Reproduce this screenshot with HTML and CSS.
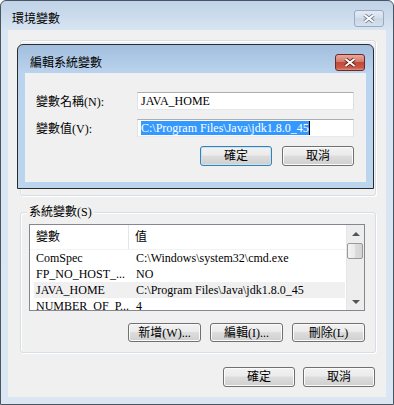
FILE: index.html
```html
<!DOCTYPE html>
<html lang="zh-Hant">
<head>
    <meta charset="UTF-8">
    <title>環境變數</title>
    <link rel="stylesheet" href="styles.css">
</head>
<body>
    <div class="window">
        <div class="titlebar">
            <span class="title">環境變數</span>
            <span class="close inactive">
                <svg width="12" height="9" viewBox="0 0 12 9"><path d="M1.5 1 L10.5 8 M10.5 1 L1.5 8" stroke="#6d7b8c" stroke-width="3.6" fill="none"/><path d="M1.5 1 L10.5 8 M10.5 1 L1.5 8" stroke="#fff" stroke-width="2" fill="none"/></svg>
            </span>
        </div>
        <div class="client">
            <!-- User variables group, mostly behind the dialog -->
            <div class="group user"></div>

            <!-- System variables -->
            <div class="group system">
                <span class="group-label">系統變數(S)</span>
                <div class="list">
                    <div class="list-body">
                        <div class="list-head">
                            <span>變數</span>
                            <span>值</span>
                        </div>
                        <div class="row"><span>ComSpec</span><span>C:\Windows\system32\cmd.exe</span></div>
                        <div class="row"><span>FP_NO_HOST_...</span><span>NO</span></div>
                        <div class="row selected"><span>JAVA_HOME</span><span>C:\Program Files\Java\jdk1.8.0_45</span></div>
                        <div class="row"><span>NUMBER_OF_P...</span><span>4</span></div>
                    </div>
                    <div class="scrollbar">
                        <div class="arrow up"><i></i></div>
                        <div class="thumb"></div>
                        <div class="track"></div>
                        <div class="arrow down"><i></i></div>
                    </div>
                </div>
                <div class="actions">
                    <button class="btn">新增(W)...</button>
                    <button class="btn">編輯(I)...</button>
                    <button class="btn">刪除(L)</button>
                </div>
            </div>

            <div class="dialog-buttons">
                <button class="btn">確定</button>
                <button class="btn">取消</button>
            </div>
        </div>

        <!-- Edit dialog on top -->
        <div class="dialog">
            <div class="titlebar">
                <span class="title">編輯系統變數</span>
                <span class="close active">
                    <svg width="12" height="9" viewBox="0 0 12 9"><path d="M1.5 1 L10.5 8 M10.5 1 L1.5 8" stroke="#5a1e18" stroke-width="3.6" fill="none"/><path d="M1.5 1 L10.5 8 M10.5 1 L1.5 8" stroke="#fff" stroke-width="2" fill="none"/></svg>
                </span>
            </div>
            <div class="client">
                <div class="field">
                    <label>變數名稱(N):</label>
                    <div class="input">JAVA_HOME</div>
                </div>
                <div class="field">
                    <label>變數值(V):</label>
                    <div class="input"><span class="selection">C:\Program Files\Java\jdk1.8.0_45</span></div>
                </div>
                <div class="dialog-buttons">
                    <button class="btn default">確定</button>
                    <button class="btn">取消</button>
                </div>
            </div>
        </div>
    </div>
</body>
</html>
```

FILE: styles.css
```css
/* Windows 7 style environment variables dialog */
body { margin: 0; padding: 0; background: #fff; font-family: "Liberation Serif", "Noto Sans CJK TC", serif; font-size: 12px; color: #000; }

.window { position: relative; width: 394px; height: 405px; box-sizing: border-box; border: 1px solid #4a5561; border-radius: 6px 6px 0 0; background: linear-gradient(#bfd2e7, #d9e5f2 30px, #dbe6f3); overflow: hidden; }
.titlebar { display: flex; align-items: center; height: 29px; box-sizing: border-box; padding: 6px 9px 0 11px; }
.title { flex: 1; line-height: 12px; }
.close { display: flex; align-items: center; justify-content: center; width: 30px; height: 17px; box-sizing: border-box; border-radius: 3px; }
.close.inactive { border: 1px solid #9aabc0; background: linear-gradient(#e3ebf5, #d2deeb 50%, #c8d6e6 50%, #d5e1ee); }
.close.active { border: 1px solid #6b2a22; background: linear-gradient(#e8a99b, #d4796a 45%, #c24a38 50%, #c9594a 85%, #e0917f); }

.window > .client { display: flex; flex-direction: column; width: 378px; height: 367px; margin: 0 7px; box-sizing: border-box; padding: 0 10px 0 12px; background: #f0f0f0; }

.group { position: relative; box-sizing: border-box; border: 1px solid #d5dfe5; border-radius: 3px; box-shadow: inset 1px 1px 0 #fff, 1px 1px 0 #fff; }
.group.user { margin-top: 10px; height: 156px; }
.group.system { margin-top: 16px; height: 141px; padding: 11px 9px 0 8px; }
.group-label { position: absolute; top: -8px; left: 6px; padding: 0 2px; background: #f0f0f0; line-height: 14px; }

.list { display: flex; width: 336px; height: 87px; box-sizing: border-box; border: 1px solid #828790; background: #fff; overflow: hidden; }
.list-body { flex: 1; overflow: hidden; }
.list-head { display: grid; grid-template-columns: 99px 1fr; height: 24px; align-items: center; border-bottom: 1px solid #f3f3f3; }
.list-head span { padding-left: 6px; line-height: 24px; }
.list-head span:first-child { border-right: 1px solid #e5e5e5; }
.row { display: grid; grid-template-columns: 95px 1fr; height: 16px; line-height: 16px; margin: 0 1px 0 4px; white-space: nowrap; }
.row span { padding-left: 2px; overflow: hidden; }
.row span + span { padding-left: 7px; }
.row.selected { background: #f0f0f0; }

.scrollbar { display: flex; flex-direction: column; width: 17px; background: #ededed; border-left: 1px solid #e6e6e6; }
.arrow { display: flex; align-items: center; justify-content: center; height: 17px; }
.arrow i { width: 0; height: 0; border-left: 4px solid transparent; border-right: 4px solid transparent; }
.arrow.up i { border-bottom: 4px solid #555; }
.arrow.down i { border-top: 4px solid #555; }
.thumb { height: 16px; margin: 1px 1px 0 0; box-sizing: border-box; border: 1px solid #9a9a9a; border-radius: 2px; background: linear-gradient(90deg, #f4f4f4, #e9e9e9 50%, #dcdcdc 50%, #d4d4d4); }
.track { flex: 1; }

.actions { display: flex; justify-content: flex-end; gap: 9px; margin-top: 12px; margin-right: 1px; }
.actions .btn { width: 73px; height: 19px; }

.btn { width: 72px; height: 20px; padding: 0; box-sizing: border-box; border: 1px solid #707070; border-radius: 3px; background: linear-gradient(#f2f2f2, #ebebeb 45%, #dddddd 50%, #cfcfcf); box-shadow: inset 0 0 0 1px #fbfbfb; font-family: "Liberation Serif", "Noto Sans CJK TC", serif; font-size: 12px; color: #000; line-height: 16px; }
.btn.default { border-color: #3c7fb1; box-shadow: inset 0 0 0 1px #c4e5f6; }

.window > .client > .dialog-buttons { display: flex; justify-content: flex-end; gap: 8px; margin-top: 14px; margin-right: 1px; }

.dialog { position: absolute; left: 16px; top: 43px; width: 357px; height: 145px; box-sizing: border-box; border: 1px solid #2b2b2b; border-radius: 6px 6px 0 0; background: linear-gradient(#a2bedd, #bad3ee 28px, #bcd5ef); }
.dialog .titlebar { height: 28px; padding: 7px 8px 0 12px; }
.dialog .client { width: 341px; height: 109px; margin: 0 7px; box-sizing: border-box; padding: 19px 12px 0 11px; background: #f0f0f0; }

.field { display: flex; align-items: center; height: 18px; margin-bottom: 9px; }
.field label { width: 102px; }
.input { width: 219px; height: 18px; box-sizing: border-box; border: 1px solid; border-color: #abadb3 #dbdfe6 #e3e9ef #e2e3ea; background: #fff; padding: 0 3px; line-height: 16px; white-space: nowrap; }
.selection { display: inline-block; background: #3399ff; color: #fff; line-height: 14px; border-right: 1px solid #000; }

.dialog .dialog-buttons { display: flex; justify-content: flex-end; gap: 10px; margin-top: 4px; }
```
